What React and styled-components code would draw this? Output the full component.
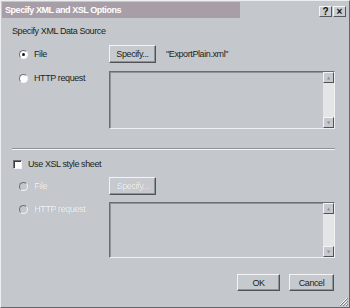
import React from "react";
import styled, { createGlobalStyle } from "styled-components";

const GlobalStyle = createGlobalStyle`
  html, body {
    margin: 0;
    padding: 0;
    background: #c4c8cd;
  }
  * {
    box-sizing: border-box;
  }
`;

const FONT = `"Liberation Sans", Arial, sans-serif`;

function App() {
  return (
    <>
      <GlobalStyle />
      <Dialog>
        <TitleBar>
          <Caption>Specify XML and XSL Options</Caption>
          <TitleButtons>
            <SmallButton>?</SmallButton>
            <SmallButton>×</SmallButton>
          </TitleButtons>
        </TitleBar>
        <Body>
          <Heading>Specify XML Data Source</Heading>

          <Row $top={8}>
            <OptionCell>
              <Radio $checked />
              <Label>File</Label>
            </OptionCell>
            <Button>Specify...</Button>
            <FileName>"ExportPlain.xml"</FileName>
          </Row>

          <Row $top={8} $start>
            <OptionCell $offset={1}>
              <Radio />
              <Label>HTTP request</Label>
            </OptionCell>
            <TextBox $h={58}>
              <ScrollBar>
                <Arrow>▲</Arrow>
                <Arrow>▼</Arrow>
              </ScrollBar>
            </TextBox>
          </Row>

          <Separator />

          <CheckRow>
            <CheckBox />
            <Label>Use XSL style sheet</Label>
          </CheckRow>

          <Row $top={7}>
            <OptionCell>
              <Radio $disabled />
              <Label $disabled>File</Label>
            </OptionCell>
            <Button $disabled>Specify...</Button>
          </Row>

          <Row $top={7} $start>
            <OptionCell $offset={1}>
              <Radio $disabled />
              <Label $disabled>HTTP request</Label>
            </OptionCell>
            <TextBox $h={56}>
              <ScrollBar>
                <Arrow>▲</Arrow>
                <Arrow>▼</Arrow>
              </ScrollBar>
            </TextBox>
          </Row>

          <Footer>
            <Button $w={43}>OK</Button>
            <Button $w={45}>Cancel</Button>
          </Footer>
        </Body>
        <Grip viewBox="0 0 9 9">
          <path d="M8 1 L1 8 M8 4 L4 8 M8 7 L7 8" stroke="#ffffff" strokeWidth="1" />
          <path d="M9 1 L1 9 M9 4 L4 9 M9 7 L7 9" stroke="#7d8287" strokeWidth="1" />
        </Grip>
      </Dialog>
    </>
  );
}

export default App;

const Dialog = styled.div`
  position: relative;
  width: 350px;
  height: 308px;
  background: #c4c8cd;
  border: 1px solid;
  border-color: #eceef0 #62666b #62666b #eceef0;
  font-family: ${FONT};
  font-size: 9px;
  letter-spacing: -0.4px;
  color: #1c1e20;
  display: flex;
  flex-direction: column;
`;

const TitleBar = styled.div`
  display: flex;
  align-items: center;
  height: 16px;
  margin: 1px 1px 0 1px;
`;

const Caption = styled.div`
  flex: 0 0 238px;
  height: 100%;
  background: #a89ea8;
  color: #ffffff;
  font-weight: bold;
  font-size: 9px;
  letter-spacing: -0.45px;
  line-height: 16px;
  padding-left: 3px;
`;

const TitleButtons = styled.div`
  margin-left: auto;
  display: flex;
  gap: 1px;
  padding-right: 2px;
  padding-top: 3px;
`;

const SmallButton = styled.div`
  width: 13px;
  height: 11px;
  background: #c9cdd1;
  border: 1px solid;
  border-color: #f4f5f6 #55595e #55595e #f4f5f6;
  font-weight: bold;
  font-size: 10px;
  letter-spacing: 0;
  line-height: 9px;
  text-align: center;
  color: #111;
`;

const Body = styled.div`
  display: flex;
  flex-direction: column;
  padding: 0 14px 0 11px;
`;

const Heading = styled.div`
  margin-top: 7px;
  line-height: 12px;
  height: 12px;
`;

const Row = styled.div`
  display: flex;
  align-items: ${(p) => (p.$start ? "flex-start" : "center")};
  margin-top: ${(p) => p.$top}px;
`;

const OptionCell = styled.div`
  flex: 0 0 97px;
  display: flex;
  align-items: center;
  gap: 6px;
  padding-left: 7px;
  height: 12px;
  margin-top: ${(p) => p.$offset || 0}px;
`;

const Radio = styled.span`
  position: relative;
  width: 9px;
  height: 9px;
  border-radius: 50%;
  border: 1px solid;
  border-color: #6d7176 #f2f3f4 #f2f3f4 #6d7176;
  background: ${(p) => (p.$disabled ? "#c4c8cd" : "#ffffff")};
  flex: none;
  &::after {
    content: "";
    display: ${(p) => (p.$checked ? "block" : "none")};
    position: absolute;
    left: 2px;
    top: 2px;
    width: 3px;
    height: 3px;
    border-radius: 50%;
    background: #1a1a1a;
  }
`;

const Label = styled.span`
  line-height: 12px;
  white-space: nowrap;
  color: ${(p) => (p.$disabled ? "#f3f5f7" : "#1c1e20")};
  text-shadow: ${(p) => (p.$disabled ? "-0.5px -0.5px 0 #a3a8ad" : "none")};
`;

const Button = styled.div`
  width: ${(p) => p.$w || 47}px;
  height: ${(p) => (p.$w ? 17 : 18)}px;
  display: flex;
  align-items: center;
  justify-content: center;
  background: #c6cacf;
  border: 1px solid;
  border-color: #f3f4f5 #4f5358 #4f5358 #f3f4f5;
  box-shadow: inset -1px -1px 0 #8e9398;
  color: ${(p) => (p.$disabled ? "#f2f4f6" : "#1c1e20")};
  text-shadow: ${(p) => (p.$disabled ? "-0.5px -0.5px 0 #a3a8ad" : "none")};
  flex: none;
`;

const FileName = styled.span`
  margin-left: 10px;
  white-space: nowrap;
`;

const TextBox = styled.div`
  flex: 1;
  height: ${(p) => p.$h}px;
  display: flex;
  justify-content: flex-end;
  border: 1px solid;
  border-color: #6a6e73 #eef0f2 #eef0f2 #6a6e73;
  box-shadow: inset 1px 1px 0 #8f9499;
`;

const ScrollBar = styled.div`
  width: 11px;
  display: flex;
  flex-direction: column;
  justify-content: space-between;
  background: #e3e5e7;
`;

const Arrow = styled.div`
  width: 11px;
  height: 11px;
  background: #c6cacf;
  border: 1px solid;
  border-color: #f3f4f5 #4f5358 #4f5358 #f3f4f5;
  font-family: "DejaVu Sans", sans-serif;
  font-size: 4px;
  letter-spacing: 0;
  line-height: 9px;
  text-align: center;
  color: #8a8f94;
`;

const Separator = styled.div`
  margin-top: 19px;
  height: 2px;
  border-top: 1px solid #8f9499;
  border-bottom: 1px solid #f4f5f6;
`;

const CheckRow = styled.div`
  display: flex;
  align-items: center;
  gap: 6px;
  margin-top: 8px;
  height: 12px;
  padding-left: 1px;
`;

const CheckBox = styled.span`
  width: 9px;
  height: 9px;
  background: #ffffff;
  border: 1px solid;
  border-color: #6d7176 #f2f3f4 #f2f3f4 #6d7176;
  box-shadow: inset 1px 1px 0 #3a3d40;
  flex: none;
`;

const Footer = styled.div`
  display: flex;
  justify-content: flex-end;
  gap: 9px;
  margin-top: 16px;
  padding-right: 1px;
`;

const Grip = styled.svg`
  position: absolute;
  right: 1px;
  bottom: 1px;
  width: 9px;
  height: 9px;
`;
